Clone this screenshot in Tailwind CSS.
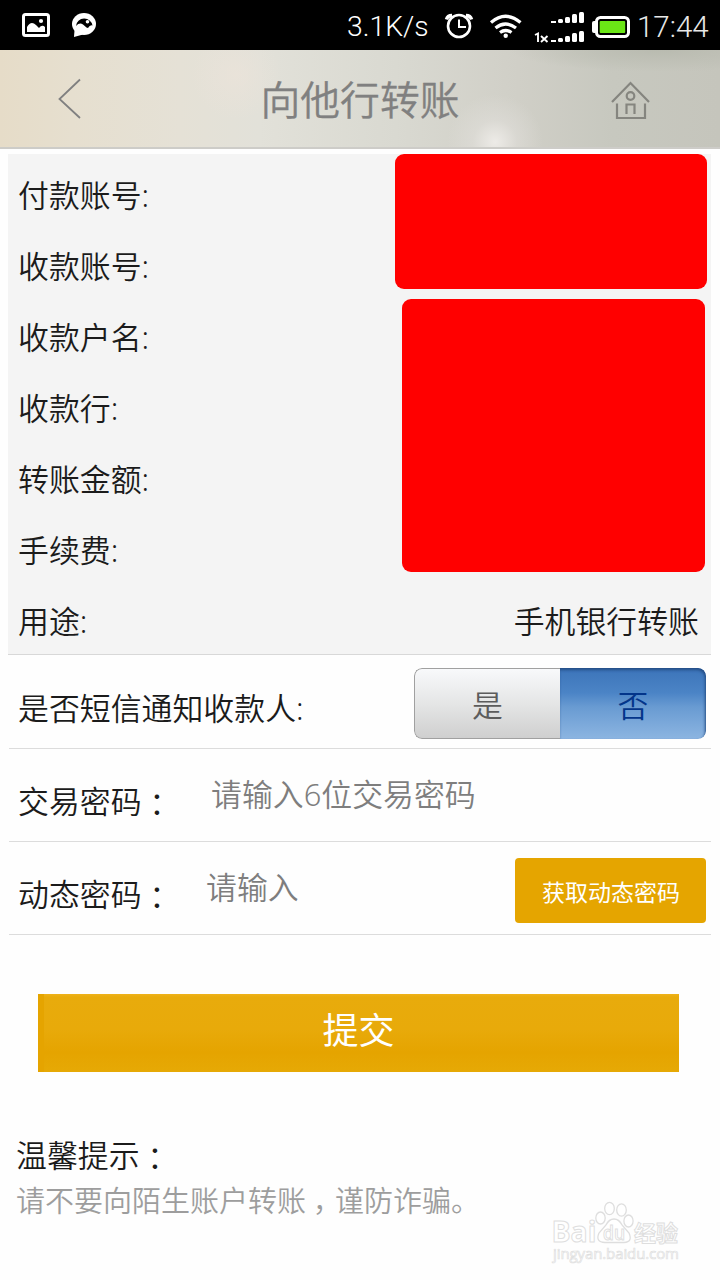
<!DOCTYPE html>
<html lang="zh-CN">
<head>
<meta charset="utf-8">
<title>向他行转账</title>
<script src="https://cdn.jsdelivr.net/npm/@tailwindcss/browser@4"></script>
</head>
<body class="bg-[#fefefe]">
<div class="relative flex h-[1280px] w-[720px] flex-col overflow-hidden bg-[#fefefe] font-['Noto_Sans','Noto_Sans_CJK_SC',sans-serif] text-[30.9px] font-[350] text-[#1b1b1b]">
  <!-- status bar -->
  <div class="flex h-[50px] shrink-0 items-center bg-black font-['Roboto',sans-serif] font-light text-white">
    <svg class="block h-[50px] w-[340px]" viewBox="0 0 340 50">
      <rect x="23.500" y="14.500" width="25" height="21" rx="2" fill="none" stroke="#fff" stroke-width="3"/>
      <path d="M27 32V27Q31 20 36 25L39 28Q42 24 45 27V32Z" fill="#fff"/><circle cx="41" cy="21" r="2.100" fill="#fff"/>
      <path d="M74 37L74.500 30L83 34.500Z" fill="#fff"/><ellipse cx="84" cy="24" rx="12" ry="11" fill="#fff"/>
      <path d="M76 26A8.300 8 0 0 1 92.500 25.500Q90 24.500 88 28L86.500 27.500L83 24.500Q79.500 22 76 26Z" fill="#000"/><circle cx="87.500" cy="21.800" r="1.800" fill="#fff"/>
    </svg>
    <div class="w-[90px] shrink-0 pl-[7px] pt-[4px] text-[28.300px] leading-[50px]">3.1K/s</div>
    <svg class="block h-[50px] w-[205px]" viewBox="430 0 205 50" fill="none" stroke="#fff">
      <circle cx="459" cy="26" r="11" stroke-width="2.600"/><path d="M459 19.500V27H466" stroke-width="2"/>
      <path d="M446.500 19.500Q447.500 15.500 452 15.500M466 15.500Q470.500 15.500 471.500 19.500" stroke-width="3.500"/>
      <path d="M491 22.500Q505.500 10 520.500 22.500M495.500 28Q505.500 20 516 28M500 32.500Q505.500 28.500 511.500 32.500" stroke-width="3.300"/><circle cx="505.700" cy="35.700" r="2.200" fill="#fff" stroke="none"/>
      <g fill="#fff" stroke="none">
        <path d="M551 21h5v2h-5z"/><rect x="558" y="19" width="5" height="4" rx="1.500"/><rect x="565" y="17" width="5" height="6" rx="1.500"/><rect x="572" y="14" width="5" height="9" rx="1.500"/><rect x="579" y="12" width="5" height="11" rx="1.500"/>
        <path d="M551 40h5v2h-5z"/><rect x="558" y="38" width="5" height="4" rx="1.500"/><rect x="565" y="36" width="5" height="6" rx="1.500"/><rect x="572" y="33" width="5" height="9" rx="1.500"/><rect x="579" y="31" width="5" height="11" rx="1.500"/>
        <rect x="592" y="21" width="6" height="12" rx="2"/><rect x="599.700" y="21" width="25.500" height="12" rx="1" fill="#6be616"/>
      </g>
      <path d="M535 35L538 33.500V42M541 36L547.500 42M547.500 36L541 42" stroke-width="1.900"/>
      <rect x="596.500" y="17.500" width="32" height="19" rx="4" stroke-width="3"/>
    </svg>
    <div class="w-[85px] shrink-0 pl-[2px] pt-[4px] text-[29.500px] leading-[50px] text-[#e8e8e8]">17:44</div>
  </div>
  <!-- title bar -->
  <div class="flex h-[99px] shrink-0 items-center border-b-2 border-[#cdccc8] bg-[radial-gradient(circle_at_495px_92px,#edebe7_0,#e2e0dc80_22px,transparent_48px),radial-gradient(circle_at_236px_25px,#efe4da80_0,transparent_45px),radial-gradient(ellipse_at_660px_0px,#b9bbb0_0,transparent_150px),linear-gradient(90deg,#e6dcc8_0%,#e6dfcf_10%,#e5e1d6_25%,#e2e1d9_36%,#d9d9d1_55%,#d0cfc7_72%,#c7c8bf_85%,#c5c5bc_100%)] text-[#808080]">
    <svg class="h-[99px] w-[240px]" viewBox="0 49 240 99" fill="none" stroke="#808080" stroke-width="1.800"><path d="M80 79.500L59.500 99L80 118"/></svg>
    <div class="w-[240px] pt-[2px] text-center text-[39.800px] font-[350] leading-[99px] [-webkit-text-stroke:0.300px_#808080]">向他行转账</div>
    <svg class="h-[99px] w-[240px]" viewBox="480 49 240 99" fill="none" stroke="#85857f" stroke-width="2.200"><path d="M612 102L630.500 83L649 102M617 103.500V118H645V103.500M626.500 114V104.500H634.500V114"/><circle cx="630.500" cy="96" r="3.800"/></svg>
  </div>
  <!-- transfer details -->
  <div class="relative ml-2 mt-[5px] flex h-[501px] w-[703px] shrink-0 flex-col border-b border-[#d8d8d8] bg-[#f4f4f4] pl-[10px] pr-[12px] pt-[6px] leading-[71px]">
    <div class="h-[71px]">付款账号:</div>
    <div class="h-[71px]">收款账号:</div>
    <div class="h-[71px]">收款户名:</div>
    <div class="h-[71px]">收款行:</div>
    <div class="h-[71px]">转账金额:</div>
    <div class="h-[71px]">手续费:</div>
    <div class="flex h-[68px] justify-between"><span>用途:</span><span>手机银行转账</span></div>
    <div class="absolute left-[387px] top-0 h-[135px] w-[312px] rounded-[9px] bg-[#ff0000]"></div>
    <div class="absolute left-[394px] top-[145px] h-[273px] w-[303px] rounded-[9px] bg-[#ff0000]"></div>
  </div>
  <div class="ml-[9px] flex h-[94px] w-[702px] shrink-0 justify-between border-b border-[#dcdcdc] pl-[9px] pr-[5px]">
    <div class="pt-[6px] leading-[94px]">是否短信通知收款人:</div>
    <div class="mt-[13px] flex h-[71px] w-[292px] overflow-hidden rounded-[8px] text-center leading-[72px]">
      <div class="w-[146px] rounded-l-[8px] border-y border-l border-[#a0a0a0] bg-linear-to-b from-[#f8f9fb] via-[#e5e6e6] to-[#cfcfcf] text-[#5c5c5c]">是</div>
      <div class="w-[146px] rounded-r-[8px] bg-[linear-gradient(#3c74b9_0%,#4b84c6_35%,#699bd2_55%,#8cb5e1_100%)] pt-px text-[#03358a] shadow-[inset_-1px_2px_3px_#234c84]">否</div>
    </div>
  </div>
  <div class="ml-[9px] flex h-[93px] w-[702px] shrink-0 border-b border-[#dcdcdc] pl-[9px]">
    <div class="w-[193px] pt-[5px] leading-[94px]">交易密码<span lang="zh-TW" class="inline-block translate-y-[3px] font-['Noto_Sans_CJK_TC'] leading-none">：</span></div>
    <div class="leading-[90px] text-[#7e7e7e]">请输入6位交易密码</div>
  </div>
  <div class="ml-[9px] flex h-[93px] w-[702px] shrink-0 border-b border-[#dcdcdc] pl-[9px]">
    <div class="w-[188px] pt-[5px] leading-[94px]">动态密码<span lang="zh-TW" class="inline-block translate-y-[3px] font-['Noto_Sans_CJK_TC'] leading-none">：</span></div>
    <div class="w-[309px] leading-[90px] text-[#7e7e7e]">请输入</div>
    <div class="mt-4 h-[65px] w-[191px] rounded-[4px] bg-[#e5a500] pl-px text-center text-[23px] font-normal leading-[69px] text-white">获取动态密码</div>
  </div>
  <!-- submit -->
  <div class="ml-[38px] mt-[59px] h-[78px] w-[641px] shrink-0 border-l-[6px] border-[#e5a400] bg-[linear-gradient(#efb21a_0,#e8ab0c_3px,#e8aa0a_45%,#e5a400_75%,#e6a905_100%)] pr-[6px] text-center text-[36px] font-normal leading-[74px] text-white">提交</div>
  <div class="ml-4 mt-[60px] h-[46px] leading-[46px]">温馨提示<span lang="zh-TW" class="inline-block translate-y-[3px] font-['Noto_Sans_CJK_TC'] leading-none">：</span></div>
  <div class="ml-4 h-[46px] text-[29px] leading-[46px] text-[#9d9d9d]">请不要向陌生账户转账<span lang="zh-TW" class="inline-block -translate-x-px translate-y-[9px] font-['Noto_Sans_CJK_TC'] leading-none">，</span>谨防诈骗。</div>
  <!-- watermark -->
  <div class="absolute left-[552px] top-[1200px] h-[68px] w-[132px]">
    <svg class="h-[68px] w-[132px] overflow-visible" viewBox="552 1200 132 68" fill="#fff" stroke="#dedede" stroke-width="1.300">
      <ellipse cx="600.500" cy="1218" rx="4.700" ry="6"/><ellipse cx="609.500" cy="1208.500" rx="4.800" ry="6.200"/><ellipse cx="621.500" cy="1210" rx="4.800" ry="6.200"/><ellipse cx="628.500" cy="1221" rx="4.600" ry="6"/>
      <path d="M614 1219Q619 1219 622 1225L629 1233Q633 1242 624 1242.500H605Q595 1242 599 1233L606 1225Q609 1219 614 1219Z"/>
      <g font-family="Open Sans, sans-serif" stroke-width="1">
        <text x="551.500" y="1242" font-size="29" font-weight="700" textLength="45" lengthAdjust="spacingAndGlyphs">Bai</text>
        <text x="603" y="1239.500" font-size="20" font-weight="600" textLength="22" lengthAdjust="spacingAndGlyphs">du</text>
        <text x="634" y="1240.500" font-size="22" font-weight="700" font-family="Noto Sans CJK SC">经验</text>
        <text x="553" y="1258.500" font-size="15" font-weight="400" stroke-width=".7" textLength="126">jingyan.baidu.com</text>
      </g>
    </svg>
  </div>
</div>
</body>
</html>
